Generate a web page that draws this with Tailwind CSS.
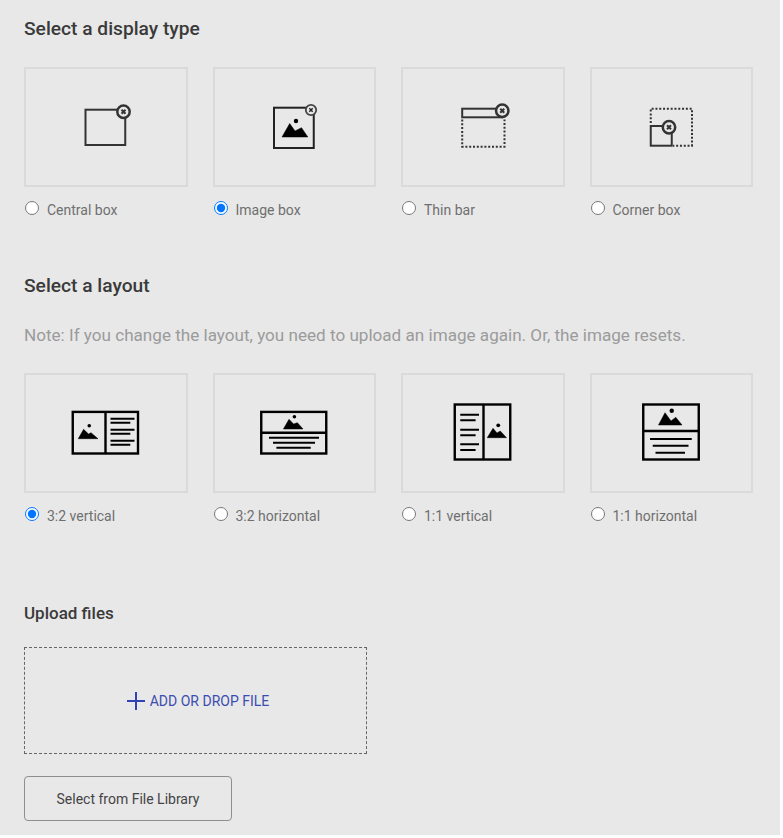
<!DOCTYPE html>
<html lang="en">
<head>
    <meta charset="UTF-8">
    <title>Display settings</title>
    <script src="https://cdn.jsdelivr.net/npm/@tailwindcss/browser@4"></script>
</head>
<body class="bg-white">
<main class="h-[835px] w-[780px] bg-[#e8e8e8] px-6 pt-[17px] font-['Roboto',sans-serif] text-[#6f6f6f]">

    <!-- Display type -->
    <h2 class="h-6 text-[19.2px] leading-6 font-medium text-[#3a3a3a]">Select a display type</h2>
    <div class="mt-[26px] grid w-[729px] grid-cols-4 gap-x-[25px]">
        <div>
            <div class="flex h-[120px] items-center justify-center border-2 border-[#dadada]">
                <svg width="60" height="60" viewBox="0 0 60 60" fill="none" stroke="#333">
                    <rect x="9.5" y="12.700" width="39.750" height="35.300" stroke-width="2"/>
                    <circle cx="47.500" cy="14.700" r="6.200" fill="#e8e8e8" stroke-width="2.500"/>
                    <path d="M45.500 12.700l4 4M49.500 12.700l-4 4" stroke-width="2"/>
                </svg>
            </div>
            <label class="mt-[13px] flex h-5 items-center gap-2 text-sm">
                <input type="radio" name="display" class="m-0 ml-px h-[14px] w-[14px] -translate-y-[2px]">Central box
            </label>
        </div>
        <div>
            <div class="flex h-[120px] items-center justify-center border-2 border-[#dadada]">
                <svg width="60" height="60" viewBox="0 0 60 60" fill="none" stroke="#222">
                    <rect x="10" y="10.700" width="39.750" height="40.300" stroke-width="2"/>
                    <circle cx="32" cy="24" r="2.200" fill="#000" stroke="none"/>
                    <path d="M18 40l7.700-13.500 5.300 7.500 6.500-3.300 6.300 9.300z" fill="#000" stroke="#000" stroke-width=".5"/>
                    <circle cx="47" cy="13" r="5.200" fill="#e8e8e8" stroke="#444" stroke-width="1.800"/>
                    <path d="M45.300 11.300l3.400 3.400M48.700 11.300l-3.400 3.400" stroke-width="1.400"/>
                </svg>
            </div>
            <label class="mt-[13px] flex h-5 items-center gap-2 text-sm">
                <input type="radio" name="display" checked class="m-0 ml-px h-[14px] w-[14px] -translate-y-[2px]">Image box
            </label>
        </div>
        <div>
            <div class="flex h-[120px] items-center justify-center border-2 border-[#dadada]">
                <svg width="60" height="60" viewBox="0 0 60 60" fill="none" stroke="#333">
                    <rect x="9.200" y="11.700" width="40" height="8.600" stroke-width="2"/>
                    <path d="M9.200 22.500V49.700H51.500V22.500" stroke-width="2" stroke-dasharray="2 1.800"/>
                    <circle cx="49.250" cy="13.700" r="6.200" fill="#e8e8e8" stroke-width="2.500"/>
                    <path d="M47.250 11.700l4 4M51.250 11.700l-4 4" stroke-width="2"/>
                </svg>
            </div>
            <label class="mt-[13px] flex h-5 items-center gap-2 text-sm">
                <input type="radio" name="display" class="m-0 ml-px h-[14px] w-[14px] -translate-y-[2px]">Thin bar
            </label>
        </div>
        <div>
            <div class="flex h-[120px] items-center justify-center border-2 border-[#dadada]">
                <svg width="60" height="60" viewBox="0 0 60 60" fill="none" stroke="#333">
                    <path d="M9.750 26V11.700H51V48.700H32" stroke-width="2" stroke-dasharray="2 1.800"/>
                    <rect x="9.750" y="29" width="21" height="19.700" stroke-width="2"/>
                    <circle cx="28" cy="30.300" r="6.200" fill="#e8e8e8" stroke-width="2.500"/>
                    <path d="M26 28.300l4 4M30 28.300l-4 4" stroke-width="2"/>
                </svg>
            </div>
            <label class="mt-[13px] flex h-5 items-center gap-2 text-sm">
                <input type="radio" name="display" class="m-0 ml-px h-[14px] w-[14px] -translate-y-[2px]">Corner box
            </label>
        </div>
    </div>

    <!-- Layout -->
    <h2 class="mt-[54px] h-6 text-[19.2px] leading-6 font-medium text-[#3a3a3a]">Select a layout</h2>
    <p class="mt-[25px] h-6 text-[17.1px] leading-6 text-[#9b9b9b]">Note: If you change the layout, you need to upload an image again. Or, the image resets.</p>
    <div class="mt-[26px] grid w-[729px] grid-cols-4 gap-x-[25px]">
        <div>
            <div class="flex h-[120px] items-center justify-center border-2 border-[#dadada]">
                <svg width="80" height="60" viewBox="0 0 80 60" fill="none" stroke="#000" stroke-width="2.400">
                    <rect x="6.750" y="8.900" width="65.250" height="41.600"/>
                    <path d="M39.500 8.900v41.600"/>
                    <circle cx="23.250" cy="22.700" r="1.800" fill="#000" stroke="none"/>
                    <path d="M12.250 35.700l5.350-9.400 4.900 4.700 2.500-1.300 7 6z" fill="#000" stroke="#000" stroke-width=".5"/>
                    <path d="M44.500 15.700h24M44.500 19.700h19.800M44.500 26.700h24M44.500 30.700h19.800M44.500 37.700h24M44.500 41.700h19.800" stroke-width="2"/>
                </svg>
            </div>
            <label class="mt-[13px] flex h-5 items-center gap-2 text-sm">
                <input type="radio" name="layout" checked class="m-0 ml-px h-[14px] w-[14px] -translate-y-[2px]">3:2 vertical
            </label>
        </div>
        <div>
            <div class="flex h-[120px] items-center justify-center border-2 border-[#dadada]">
                <svg width="80" height="60" viewBox="0 0 80 60" fill="none" stroke="#000" stroke-width="2.400">
                    <rect x="7.250" y="8.900" width="65" height="41.600"/>
                    <path d="M7.250 29.700h65"/>
                    <circle cx="40.400" cy="13.700" r="1.800" fill="#000" stroke="none"/>
                    <path d="M29.400 26l5.600-9.700 4.500 4.700 3.900-1.300 5.600 6.300z" fill="#000" stroke="#000" stroke-width=".5"/>
                    <path d="M15 34.700h50M19 39.700h42M22.400 44.700h34.300" stroke-width="2"/>
                </svg>
            </div>
            <label class="mt-[13px] flex h-5 items-center gap-2 text-sm">
                <input type="radio" name="layout" class="m-0 ml-px h-[14px] w-[14px] -translate-y-[2px]">3:2 horizontal
            </label>
        </div>
        <div>
            <div class="flex h-[120px] items-center justify-center border-2 border-[#dadada]">
                <svg width="70" height="70" viewBox="0 0 70 70" fill="none" stroke="#000" stroke-width="2.400">
                    <rect x="6.750" y="6.500" width="55.500" height="55"/>
                    <path d="M35.500 6.500v55"/>
                    <circle cx="50.250" cy="27.300" r="1.900" fill="#000" stroke="none"/>
                    <path d="M39.250 39.700l5.750-9.400 4 4.700 3.250-2 6.250 6.700z" fill="#000" stroke="#000" stroke-width=".5"/>
                    <path d="M12.250 16.700H31M12.250 22.300H27.600M12.250 31.700H31M12.250 37.300H27.600M12.250 46.300H31M12.250 52H27.600" stroke-width="2"/>
                </svg>
            </div>
            <label class="mt-[13px] flex h-5 items-center gap-2 text-sm">
                <input type="radio" name="layout" class="m-0 ml-px h-[14px] w-[14px] -translate-y-[2px]">1:1 vertical
            </label>
        </div>
        <div>
            <div class="flex h-[120px] items-center justify-center border-2 border-[#dadada]">
                <svg width="70" height="70" viewBox="0 0 70 70" fill="none" stroke="#000" stroke-width="2.400">
                    <rect x="7.250" y="6.500" width="55.500" height="55"/>
                    <path d="M7.250 33h55.500"/>
                    <circle cx="35.750" cy="12.700" r="2.200" fill="#000" stroke="none"/>
                    <path d="M22.500 27l6.500-12.300 6 8.300 4.750-3.700 6.250 7.700z" fill="#000" stroke="#000" stroke-width=".5"/>
                    <path d="M14 41h41.750M16.750 47.700H52.500M19.500 54.700H49" stroke-width="2"/>
                </svg>
            </div>
            <label class="mt-[13px] flex h-5 items-center gap-2 text-sm">
                <input type="radio" name="layout" class="m-0 ml-px h-[14px] w-[14px] -translate-y-[2px]">1:1 horizontal
            </label>
        </div>
    </div>

    <!-- Upload -->
    <h2 class="mt-[75px] h-6 text-[17px] leading-6 font-medium text-[#3a3a3a]">Upload files</h2>
    <div class="mt-[22px] flex h-[107px] w-[343px] items-center justify-center gap-[5px] border border-dashed border-[#666] pl-[5px]">
        <svg width="18" height="18" viewBox="0 0 18 18" fill="none" stroke="#2f45b5" stroke-width="2"><path d="M9 0v18M0 9h18"/></svg>
        <span class="text-sm text-[#3b4db0]">ADD OR DROP FILE</span>
    </div>
    <button class="mt-[22px] h-[45px] w-[208px] rounded border border-[#8e8e8e] text-sm text-[#444]">Select from File Library</button>
</main>
</body>
</html>
